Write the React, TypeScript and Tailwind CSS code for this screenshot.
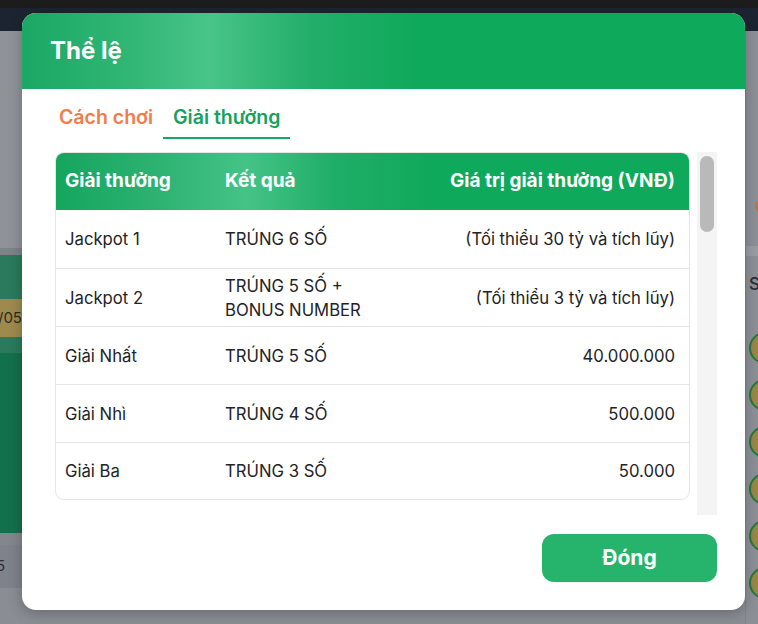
import React, { useState } from 'react';

interface PrizeRow {
  name: string;
  result: React.ReactNode;
  value: string;
}

const ROWS: PrizeRow[] = [
  { name: 'Jackpot 1', result: 'TRÚNG 6 SỐ', value: '(Tối thiểu 30 tỷ và tích lũy)' },
  { name: 'Jackpot 2', result: <>TRÚNG 5 SỐ +<br />BONUS NUMBER</>, value: '(Tối thiểu 3 tỷ và tích lũy)' },
  { name: 'Giải Nhất', result: 'TRÚNG 5 SỐ', value: '40.000.000' },
  { name: 'Giải Nhì', result: 'TRÚNG 4 SỐ', value: '500.000' },
  { name: 'Giải Ba', result: 'TRÚNG 3 SỐ', value: '50.000' },
];

function Backdrop() {
  return (
    <div className="flex h-full flex-col">
      <div className="h-[8px] bg-[#1c1c1d]" />
      <div className="h-[23px] bg-[#1d2431]" />
      <div className="flex flex-1 justify-between">
        {/* left strip */}
        <div className="flex w-[22px] flex-col overflow-hidden">
          <div className="h-[217px] bg-[#8f9297]" />
          <div className="h-[7px] bg-[#7f8288]" />
          <div className="h-[44px] bg-[#2a7a5c]" />
          <div className="flex h-[38px] items-center justify-end bg-[#9e8a4d] text-[15px] text-[#2b2a22]">/05</div>
          <div className="h-[16px] bg-[#2b7a5c]" />
          <div className="h-[180px] bg-[#13704d]" />
          <div className="h-[12px] bg-[#83868c]" />
          <div className="flex h-[43px] items-center bg-[#7f828a] text-[15px] text-[#2b2d33]">
            <span className="-ml-[4px]">5</span>
          </div>
          <div className="flex-1 bg-[#8a8d93]" />
        </div>
        {/* right strip */}
        <div className="flex w-[13px] flex-col overflow-hidden border-l border-[#80838a] bg-[#8c8f95]">
          <div className="h-[169px]" />
          <div className="ml-[9px] h-[12px] w-[10px] rounded-full bg-[#b7794a]" />
          <div className="h-[34px]" />
          <div className="h-[10px] bg-[#999ca1]" />
          <div className="flex h-[58px] items-center pl-[3px] text-[17px] font-medium text-[#2b2d33]">S</div>
          <div className="flex flex-col gap-[15px] pl-[3px] pt-[18px]">
            {[0, 1, 2, 3, 4, 5].map(i => (
              <div key={i} className="h-[32px] w-[32px] shrink-0 rounded-full border-2 border-[#1f7a3e] bg-[#9c8644]" />
            ))}
          </div>
        </div>
      </div>
    </div>
  );
}

export default function App() {
  const [tab, setTab] = useState<'rules' | 'prizes'>('prizes');

  return (
    <div className="relative h-[624px] w-[758px] overflow-hidden bg-[#8b8e94] font-['Inter','Noto_Sans',sans-serif]">
      <Backdrop />

      {/* modal */}
      <div className="absolute left-[22px] top-[13px] flex h-[597px] w-[723px] flex-col overflow-hidden rounded-[14px] bg-white shadow-[0_4px_14px_rgba(0,0,0,0.25)]">
        <div className="flex h-[76px] shrink-0 items-center bg-[linear-gradient(90deg,#1ba864_0%,#2fb574_14%,#48c489_26%,#22ae69_40%,#0fa95b_55%,#0fa95b_100%)] pl-[28px]">
          <h2 className="text-[24px] font-bold text-white">Thể lệ</h2>
        </div>

        <div className="flex flex-1 flex-col pl-[33px] pr-[28px] pt-[9px]">
          <div className="-ml-[6px] flex">
            <button
              onClick={() => setTab('rules')}
              className={`h-[41px] border-b-2 px-[10px] text-[19.5px] font-semibold ${
                tab === 'rules' ? 'border-[#1aa563] text-[#18a05e]' : 'border-transparent text-[#f07c4a]'
              }`}
            >
              Cách chơi
            </button>
            <button
              onClick={() => setTab('prizes')}
              className={`h-[41px] border-b-2 px-[10px] text-[19.5px] font-semibold ${
                tab === 'prizes' ? 'border-[#1aa563] text-[#18a05e]' : 'border-transparent text-[#f07c4a]'
              }`}
            >
              Giải thưởng
            </button>
          </div>

          <div className="mt-[13px] flex h-[363px] gap-[7px]">
            <div className="flex-1">
              <div className="overflow-hidden rounded-[9px] border border-[#e3e5e8]">
                <div className="grid h-[57px] grid-cols-[169px_1fr_1fr] items-center bg-[linear-gradient(90deg,#14a65d_0%,#2db272_16%,#45c387_30%,#1fae67_44%,#0fa95b_60%,#0fa95b_100%)] text-[19px] font-bold text-white">
                  <div className="pl-[9px]">Giải thưởng</div>
                  <div className="whitespace-nowrap">Kết quả</div>
                  <div className="whitespace-nowrap pr-[14px] text-right">Giá trị giải thưởng (VNĐ)</div>
                </div>
                {ROWS.map((r, i) => (
                  <div
                    key={r.name}
                    className={`grid grid-cols-[169px_1fr_1fr] items-center text-[16.7px] leading-[24px] text-[#222326] ${
                      i > 0 ? 'border-t border-[#e3e5e8]' : ''
                    } ${i === ROWS.length - 1 ? 'h-[57px]' : 'h-[58px]'}`}
                  >
                    <div className="pl-[9px]">{r.name}</div>
                    <div>{r.result}</div>
                    <div className="whitespace-nowrap pr-[14px] text-right">{r.value}</div>
                  </div>
                ))}
              </div>
            </div>
            {/* scrollbar */}
            <div className="w-[20px] bg-[#f4f4f4] px-[3px] pt-[4px]">
              <div className="h-[76px] rounded-full bg-[#b9b9b9]" />
            </div>
          </div>

          <div className="mt-[19px] flex justify-end">
            <button className="h-[48px] w-[175px] rounded-[12px] bg-[#26b46c] text-[21px] font-bold text-white">
              Đóng
            </button>
          </div>
        </div>
      </div>
    </div>
  );
}
